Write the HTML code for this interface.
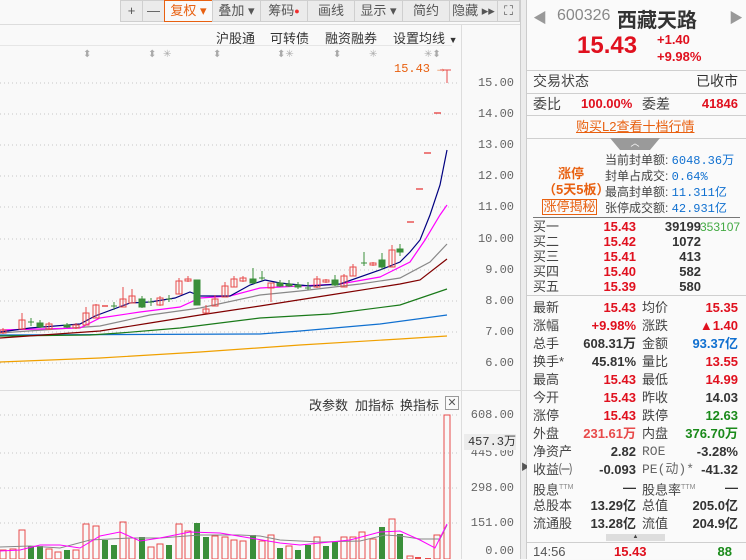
<!DOCTYPE html>
<html><head><meta charset="utf-8"><style>
*{margin:0;padding:0;box-sizing:border-box}
body{width:746px;height:559px;overflow:hidden;background:#f9f9f9;font-family:"Liberation Sans","Noto Sans CJK SC",sans-serif;position:relative}
.a{position:absolute;white-space:nowrap}
.btn{position:absolute;top:0;height:22px;border:1px solid #cfcfcf;background:#ebebeb;color:#555;font-size:13px;line-height:20px;text-align:center}
.ax{position:absolute;left:470px;width:44px;text-align:right;font-family:"Liberation Mono",monospace;font-size:12px;color:#666}
.r{position:absolute;font-size:13px;line-height:16px;white-space:nowrap}
.l{left:533px;color:#444}
.l2{left:642px;color:#444}
.v{right:110px;text-align:right;font-weight:bold}
.v2{right:8px;text-align:right;font-weight:bold}
.red{color:#e0101e}.grn{color:#1a8a1a}.blu{color:#1070d0}.dk{color:#333}
.hl{position:absolute;left:527px;width:219px;height:1px;background:#cfcfcf}
</style></head><body>
<!-- toolbar -->
<div class="btn" style="left:120px;width:23px">+</div>
<div class="btn" style="left:142px;width:23px">—</div>
<div class="btn" style="left:164px;width:49px;border-color:#e86010;background:#f9f9f9;color:#e86010">复权 ▾</div>
<div class="btn" style="left:212px;width:49px">叠加 ▾</div>
<div class="btn" style="left:260px;width:48px">筹码<span style="color:#f03030;font-size:9px;vertical-align:top">●</span></div>
<div class="btn" style="left:307px;width:48px">画线</div>
<div class="btn" style="left:354px;width:49px">显示 ▾</div>
<div class="btn" style="left:402px;width:48px">简约</div>
<div class="btn" style="left:449px;width:49px">隐藏 ▸▸</div>
<div class="btn" style="left:497px;width:23px">⛶</div>
<div class="a" style="left:0;top:24px;width:520px;height:1px;background:#ddd"></div>
<div class="a" style="left:0;top:45px;width:452px;height:1px;background:#e6e6e6"></div>
<div class="a" style="left:461px;top:24px;width:1px;height:535px;background:#ddd"></div>
<div class="a" style="left:216px;top:28px;font-size:13px;color:#333">沪股通</div>
<div class="a" style="left:270px;top:28px;font-size:13px;color:#333">可转债</div>
<div class="a" style="left:325px;top:28px;font-size:13px;color:#333">融资融券</div>
<div class="a" style="left:393px;top:28px;font-size:13px;color:#333">设置均线 <span style="font-size:9px">▼</span></div>
<div class="a" style="left:394px;top:62px;font-family:'Liberation Mono',monospace;font-size:12px;color:#e86010">15.43 →</div>
<!-- axis -->
<div class="ax" style="top:76px">15.00</div><div class="ax" style="top:107px">14.00</div><div class="ax" style="top:138px">13.00</div><div class="ax" style="top:169px">12.00</div><div class="ax" style="top:200px">11.00</div><div class="ax" style="top:232px">10.00</div><div class="ax" style="top:263px">9.00</div><div class="ax" style="top:294px">8.00</div><div class="ax" style="top:325px">7.00</div><div class="ax" style="top:356px">6.00</div>
<div class="ax" style="top:408px">608.00</div><div class="ax" style="top:446px">445.00</div><div class="ax" style="top:481px">298.00</div><div class="ax" style="top:516px">151.00</div><div class="ax" style="top:544px">0.00</div>
<div class="a" style="left:464px;top:434px;width:52px;height:16px;background:#ececec;font-family:'Liberation Mono',monospace;font-size:12px;color:#333;text-align:right;line-height:16px">457.3万</div>
<div class="a" style="left:0;top:390px;width:520px;height:1px;background:#ddd"></div>
<div class="a" style="left:309px;top:395px;font-size:13px;color:#333">改参数</div>
<div class="a" style="left:355px;top:395px;font-size:13px;color:#333">加指标</div>
<div class="a" style="left:400px;top:395px;font-size:13px;color:#333">换指标</div>
<div class="a" style="left:445px;top:396px;width:14px;height:14px;border:1px solid #999;font-size:11px;line-height:12px;text-align:center;color:#555">✕</div>
<svg class="a" style="left:0;top:0" width="520" height="559">
<g stroke="#c8c8c8" stroke-dasharray="1,3">
<line x1="0" y1="83" x2="460" y2="83"/><line x1="0" y1="114" x2="460" y2="114"/><line x1="0" y1="145" x2="460" y2="145"/><line x1="0" y1="176" x2="460" y2="176"/><line x1="0" y1="207" x2="460" y2="207"/><line x1="0" y1="239" x2="460" y2="239"/><line x1="0" y1="270" x2="460" y2="270"/><line x1="0" y1="301" x2="460" y2="301"/><line x1="0" y1="332" x2="460" y2="332"/><line x1="0" y1="363" x2="460" y2="363"/>
<line x1="0" y1="415" x2="460" y2="415"/><line x1="0" y1="453" x2="460" y2="453"/><line x1="0" y1="488" x2="460" y2="488"/><line x1="0" y1="523" x2="460" y2="523"/>
</g>
<g fill="#aaa" font-size="10"><text x="83" y="57">⬍</text><text x="148" y="57">⬍</text><text x="163" y="57">✳</text><text x="213" y="57">⬍</text><text x="277" y="57">⬍✳</text><text x="333" y="57">⬍</text><text x="369" y="57">✳</text><text x="424" y="57">✳⬍</text></g>
<line x1="440" y1="70" x2="451" y2="70" stroke="#e84a4a"/><line x1="447" y1="70" x2="447" y2="83" stroke="#e84a4a"/>
<g stroke="#e84a4a" stroke-width="1.4">
<line x1="407" y1="222" x2="414" y2="222"/><line x1="416" y1="189" x2="423" y2="189"/><line x1="424" y1="153" x2="431" y2="153"/><line x1="434" y1="113" x2="441" y2="113"/>
</g>
<g fill="none" stroke-width="1.2">
<polyline stroke="#f0a000" points="0,362 100,358 200,352 300,345 400,339 447,336"/>
<polyline stroke="#1070d0" points="0,335 260,334 300,331 380,324 447,315"/>
<polyline stroke="#1a7a1a" points="0,336 90,335 120,333 180,328 260,318 330,314 400,305 447,289"/>
<polyline stroke="#800000" points="0,338 100,331 150,323 200,315 260,306 330,295 400,284 420,280 447,259"/>
<polyline stroke="#888" points="0,333 100,326 150,315 200,308 260,295 300,291 360,284 400,278 430,262 447,244"/>
<polyline stroke="#ff00ff" points="0,330 80,328 100,318 140,312 180,307 200,298 230,296 260,288 300,286 340,284 380,277 410,262 425,240 440,215 447,205"/>
<polyline stroke="#000080" points="0,332 30,328 80,324 95,316 130,303 150,302 175,298 190,292 200,296 230,296 250,285 265,280 280,283 310,286 340,284 380,270 400,262 410,252 420,240 430,215 440,185 447,150"/>
</g>
<g stroke="#e84a4a" fill="none">
<path d="M3 328v6M22 313v16M49 322v8M76 323v6M86 307v18M96 304v14M123 287v20M132 289v14M160 296v10M179 278v16M188 276v6M206 305v8M215 295v11M225 282v15M234 276v11M243 276v6M271 283v19M317 276v12M326 279v4M344 274v13M353 264v12M373 262v4M392 245v22"/>
<rect x="0" y="330" width="6" height="3"/><rect x="19" y="320" width="6" height="9"/><rect x="46" y="324" width="6" height="5"/><rect x="73" y="325" width="6" height="3"/><rect x="83" y="313" width="6" height="12"/><rect x="93" y="305" width="6" height="13"/><rect x="120" y="299" width="6" height="8"/><rect x="129" y="296" width="6" height="7"/><rect x="157" y="298" width="6" height="7"/><rect x="176" y="281" width="6" height="13"/><rect x="185" y="279" width="6" height="2"/><rect x="203" y="309" width="6" height="4"/><rect x="212" y="299" width="6" height="7"/><rect x="222" y="286" width="6" height="11"/><rect x="231" y="279" width="6" height="8"/><rect x="240" y="278" width="6" height="3"/><rect x="268" y="283" width="6" height="5"/><rect x="314" y="279" width="6" height="8"/><rect x="323" y="280" width="6" height="2"/><rect x="341" y="276" width="6" height="11"/><rect x="350" y="267" width="6" height="9"/><rect x="370" y="263" width="6" height="2"/><rect x="389" y="250" width="6" height="17"/>
<path d="M102 306h6M2 0" stroke-width="1.5"/>
</g>
<g stroke="#3a8f3a" fill="#3a8f3a">
<path d="M31 318v8M28 322h6M40 320v8M67 323v5M114 302v8M111 306h6M142 296v12M151 298v8M148 302h6M169 295v7M166 299h6M197 280v25M253 268v16M262 271v10M259 278h6M280 280v7M289 280v7M298 282v7M308 282v8M305 288h6M335 275v11M364 252v14M361 263h6M382 253v17M400 244v12"/>
<rect x="37" y="323" width="6" height="4"/><rect x="64" y="325" width="6" height="2"/><rect x="139" y="299" width="6" height="8"/><rect x="194" y="280" width="6" height="25"/><rect x="250" y="279" width="6" height="4"/><rect x="277" y="283" width="6" height="3"/><rect x="286" y="284" width="6" height="2"/><rect x="295" y="285" width="6" height="2"/><rect x="332" y="280" width="6" height="5"/><rect x="379" y="260" width="6" height="7"/><rect x="397" y="249" width="6" height="3"/>
</g>
<!-- volume -->
<g fill="none" stroke="#e84a4a">
<rect x="0" y="550" width="6" height="9"/><rect x="10" y="549" width="6" height="10"/><rect x="19" y="530" width="6" height="29"/><rect x="46" y="549" width="6" height="10"/><rect x="55" y="552" width="6" height="7"/><rect x="73" y="550" width="6" height="9"/><rect x="83" y="524" width="6" height="35"/><rect x="93" y="526" width="6" height="33"/><rect x="120" y="522" width="6" height="37"/><rect x="129" y="538" width="6" height="21"/><rect x="148" y="547" width="6" height="12"/><rect x="157" y="544" width="6" height="15"/><rect x="176" y="524" width="6" height="35"/><rect x="185" y="531" width="6" height="28"/><rect x="212" y="536" width="6" height="23"/><rect x="222" y="537" width="6" height="22"/><rect x="231" y="540" width="6" height="19"/><rect x="240" y="541" width="6" height="18"/><rect x="259" y="541" width="6" height="18"/><rect x="268" y="535" width="6" height="24"/><rect x="286" y="546" width="6" height="13"/><rect x="314" y="537" width="6" height="22"/><rect x="341" y="537" width="6" height="22"/><rect x="350" y="537" width="6" height="22"/><rect x="359" y="532" width="6" height="27"/><rect x="370" y="539" width="6" height="20"/><rect x="389" y="519" width="6" height="40"/><rect x="407" y="556" width="6" height="3"/><rect x="434" y="535" width="6" height="24"/><rect x="444" y="415" width="6" height="144"/>
</g>
<g fill="#3a8f3a">
<rect x="28" y="546" width="6" height="13"/><rect x="37" y="546" width="6" height="13"/><rect x="64" y="550" width="6" height="9"/><rect x="102" y="540" width="6" height="19"/><rect x="111" y="545" width="6" height="14"/><rect x="139" y="537" width="6" height="22"/><rect x="166" y="545" width="6" height="14"/><rect x="194" y="523" width="6" height="36"/><rect x="203" y="537" width="6" height="22"/><rect x="250" y="535" width="6" height="24"/><rect x="268" y="535" width="0" height="0"/><rect x="277" y="548" width="6" height="11"/><rect x="295" y="550" width="6" height="9"/><rect x="305" y="545" width="6" height="14"/><rect x="323" y="546" width="6" height="13"/><rect x="332" y="542" width="6" height="17"/><rect x="379" y="527" width="6" height="32"/><rect x="397" y="534" width="6" height="25"/><rect x="415" y="557" width="6" height="2" fill="#e84a4a"/><rect x="425" y="558" width="6" height="1" fill="#e84a4a"/>
</g>
<polyline fill="none" stroke="#888" points="0,547 30,546 60,548 90,540 130,538 160,538 200,535 240,535 260,536 280,540 320,542 360,541 385,535 400,536 420,539 440,539 447,525"/>
<polyline fill="none" stroke="#ff00ff" points="0,551 20,550 40,545 60,545 80,548 100,536 120,532 140,541 160,538 190,532 220,533 250,538 280,543 300,545 320,543 350,540 380,532 400,531 420,540 435,548 447,524"/>
</svg>
<!-- divider -->
<div class="a" style="left:520px;top:0;width:7px;height:559px;background:#ececec;border-left:1px solid #ccc;border-right:1px solid #ccc"></div>
<div class="a" style="left:521px;top:460px;font-size:9px;color:#555">▶</div>
<!-- right panel -->
<div class="a" style="left:527px;top:0;width:219px;height:559px;background:#fafafa"></div>
<div class="a" style="left:533px;top:8px;font-size:14px;color:#999">◀</div>
<div class="a" style="left:729px;top:8px;font-size:14px;color:#999">▶</div>
<div class="a" style="left:557px;top:7px;font-size:16px;color:#888">600326</div>
<div class="a" style="left:617px;top:4px;font-size:20px;font-weight:bold;color:#333">西藏天路</div>
<div class="a" style="left:577px;top:32px;font-size:24px;font-weight:bold;color:#e0101e">15.43</div>
<div class="a" style="left:657px;top:31px;font-size:13px;font-weight:bold;color:#e0101e;line-height:17px">+1.40<br>+9.98%</div>
<div class="hl" style="top:70px"></div>
<div class="r l" style="top:73px;font-size:14px">交易状态</div><div class="r v2 dk" style="top:73px;font-weight:normal;font-size:14px">已收市</div>
<div class="hl" style="top:93px"></div>
<div class="r l" style="top:96px;font-size:14px">委比</div><div class="r red" style="left:581px;top:96px;font-weight:bold">100.00%</div><div class="r" style="left:642px;top:96px;font-size:14px;color:#444">委差</div><div class="r v2 red" style="top:96px">41846</div>
<div class="hl" style="top:115px"></div>
<div class="r" style="left:576px;top:119px;color:#e86010;text-decoration:underline">购买L2查看十档行情</div>
<div class="hl" style="top:138px"></div>
<div class="a" style="left:610px;top:138px;width:50px;height:12px;background:#9a9a9a;clip-path:polygon(0 0,100% 0,80% 100%,20% 100%);color:#fff;font-size:9px;text-align:center;line-height:11px">︿</div>
<div class="r" style="left:558px;top:166px;color:#e86010;font-weight:bold">涨停</div>
<div class="r" style="left:543px;top:182px;color:#e86010;font-weight:bold">（5天5板）</div>
<div class="a" style="left:542px;top:199px;width:55px;height:16px;border:1px solid #e86010;color:#e86010;font-size:13px;line-height:14px;text-align:center">涨停揭秘</div>
<div class="r" style="left:605px;top:152px;font-size:12px;color:#444">当前封单额: <span style="color:#1070d0;font-family:'Liberation Mono',monospace">6048.36万</span></div>
<div class="r" style="left:605px;top:168px;font-size:12px;color:#444">封单占成交: <span style="color:#1070d0;font-family:'Liberation Mono',monospace">0.64%</span></div>
<div class="r" style="left:605px;top:184px;font-size:12px;color:#444">最高封单额: <span style="color:#1070d0;font-family:'Liberation Mono',monospace">11.311亿</span></div>
<div class="r" style="left:605px;top:200px;font-size:12px;color:#444">张停成交额: <span style="color:#1070d0;font-family:'Liberation Mono',monospace">42.931亿</span></div>
<div class="a" style="left:533px;top:217px;width:207px;height:1px;background:#777"></div>
<div class="r l" style="top:219px">买一</div><div class="r v red" style="top:219px">15.43</div><div class="r v2 dk" style="top:219px;right:45px">39199</div><div class="r" style="left:700px;top:219px;color:#4a4;font-size:12px">353107</div>
<div class="r l" style="top:234px">买二</div><div class="r v red" style="top:234px">15.42</div><div class="r v2 dk" style="top:234px;right:45px">1072</div>
<div class="r l" style="top:249px">买三</div><div class="r v red" style="top:249px">15.41</div><div class="r v2 dk" style="top:249px;right:45px">413</div>
<div class="r l" style="top:264px">买四</div><div class="r v red" style="top:264px">15.40</div><div class="r v2 dk" style="top:264px;right:45px">582</div>
<div class="r l" style="top:279px">买五</div><div class="r v red" style="top:279px">15.39</div><div class="r v2 dk" style="top:279px;right:45px">580</div>
<div class="hl" style="top:295px"></div>
<div class="r l" style="top:300px">最新</div><div class="r v red" style="top:300px">15.43</div><div class="r l2" style="top:300px">均价</div><div class="r v2 red" style="top:300px">15.35</div>
<div class="r l" style="top:318px">涨幅</div><div class="r v red" style="top:318px">+9.98%</div><div class="r l2" style="top:318px">涨跌</div><div class="r v2 red" style="top:318px">▲1.40</div>
<div class="r l" style="top:336px">总手</div><div class="r v dk" style="top:336px">608.31万</div><div class="r l2" style="top:336px">金额</div><div class="r v2 blu" style="top:336px">93.37亿</div>
<div class="r l" style="top:354px">换手*</div><div class="r v dk" style="top:354px">45.81%</div><div class="r l2" style="top:354px">量比</div><div class="r v2 red" style="top:354px">13.55</div>
<div class="r l" style="top:372px">最高</div><div class="r v red" style="top:372px">15.43</div><div class="r l2" style="top:372px">最低</div><div class="r v2 red" style="top:372px">14.99</div>
<div class="r l" style="top:390px">今开</div><div class="r v red" style="top:390px">15.43</div><div class="r l2" style="top:390px">昨收</div><div class="r v2 dk" style="top:390px">14.03</div>
<div class="r l" style="top:408px">涨停</div><div class="r v red" style="top:408px">15.43</div><div class="r l2" style="top:408px">跌停</div><div class="r v2 grn" style="top:408px">12.63</div>
<div class="r l" style="top:426px">外盘</div><div class="r v" style="top:426px;color:#e84a4a">231.61万</div><div class="r l2" style="top:426px">内盘</div><div class="r v2 grn" style="top:426px">376.70万</div>
<div class="r l" style="top:444px">净资产</div><div class="r v dk" style="top:444px">2.82</div><div class="r l2" style="top:444px;font-family:'Liberation Mono',monospace;color:#666">ROE</div><div class="r v2 dk" style="top:444px">-3.28%</div>
<div class="r l" style="top:462px">收益㈠</div><div class="r v dk" style="top:462px">-0.093</div><div class="r l2" style="top:462px;font-family:'Liberation Mono','Noto Sans CJK SC',monospace;color:#666">PE(动)*</div><div class="r v2 dk" style="top:462px">-41.32</div>
<div class="r l" style="top:480px">股息<sup style="font-size:7px;color:#888">TTM</sup></div><div class="r v dk" style="top:480px">—</div><div class="r l2" style="top:480px">股息率<sup style="font-size:7px;color:#888">TTM</sup></div><div class="r v2 dk" style="top:480px">—</div>
<div class="r l" style="top:498px">总股本</div><div class="r v dk" style="top:498px">13.29亿</div><div class="r l2" style="top:498px">总值</div><div class="r v2 dk" style="top:498px">205.0亿</div>
<div class="r l" style="top:516px">流通股</div><div class="r v dk" style="top:516px">13.28亿</div><div class="r l2" style="top:516px">流值</div><div class="r v2 dk" style="top:516px">204.9亿</div>
<div class="a" style="left:606px;top:534px;width:59px;height:7px;background:#ddd;font-size:6px;text-align:center;line-height:7px;color:#444">▲</div>
<div class="hl" style="top:542px"></div>
<div class="r" style="left:533px;top:544px;color:#555">14:56</div><div class="r red" style="left:614px;top:544px;font-weight:bold">15.43</div><div class="r grn" style="right:14px;top:544px;font-weight:bold">88</div>
</body></html>
